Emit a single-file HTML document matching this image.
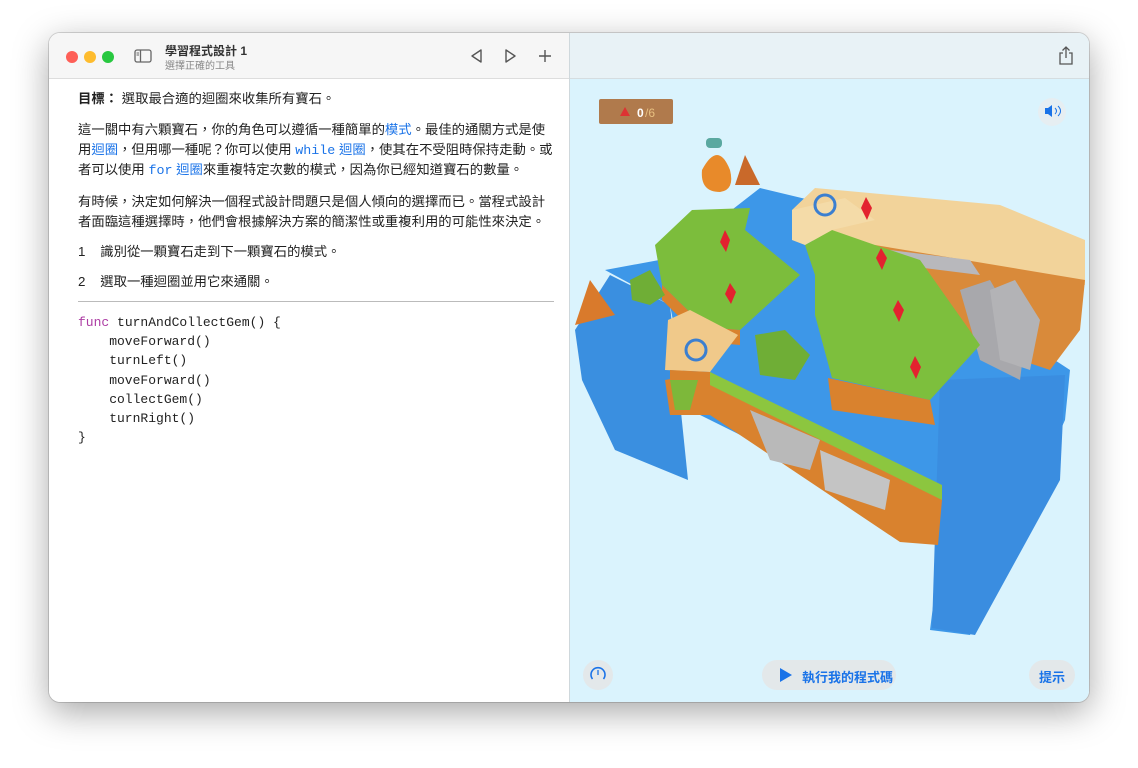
<!DOCTYPE html>
<html><head><meta charset="utf-8"><style>
*{margin:0;padding:0;box-sizing:border-box}
body{width:1138px;height:768px;background:#fff;position:relative;overflow:hidden;font-family:"Liberation Sans","Noto Sans CJK TC",sans-serif}
.win{position:absolute;left:49px;top:33px;width:1040px;height:669px;border-radius:11px;overflow:hidden;box-shadow:0 10px 35px rgba(0,0,0,.35),0 0 0 1px rgba(0,0,0,.15)}
.left{position:absolute;left:0;top:0;width:520px;height:669px;background:#fff}
.tb{position:absolute;left:0;top:0;width:520px;height:46px;background:#f6f6f6;border-bottom:1px solid #ddd}
.right{position:absolute;left:520px;top:0;width:520px;height:669px;background:#daf3fd;border-left:1px solid #cfd8dc}
.rtb{position:absolute;left:0;top:0;width:520px;height:46px;background:#e8f2f6;border-bottom:1px solid #d5dde0}
.dot{position:absolute;top:18px;width:12px;height:12px;border-radius:50%}
.t{position:absolute;left:29px;color:#222;font-size:13.35px;line-height:20px;white-space:nowrap}
.b{color:#1a73e8}
.m{font-family:"Liberation Mono",monospace}
.code{position:absolute;left:29px;top:280px;font-family:"Liberation Mono",monospace;font-size:13px;line-height:19.2px;color:#222;white-space:pre}
.kw{color:#ad3da4}
.btn{position:absolute;background:#e3e8ea;border-radius:16px;color:#1a73e8;font-size:13px;font-weight:600}
</style></head><body>
<div class="win">
<div class="left">
 <div class="tb">
  <div class="dot" style="left:17px;background:#fe5f57"></div>
  <div class="dot" style="left:35px;background:#febc2e"></div>
  <div class="dot" style="left:53px;background:#28c840"></div>
  <svg style="position:absolute;left:85px;top:16px" width="18" height="14"><rect x="1" y="1" width="16" height="12" rx="2" fill="none" stroke="#666" stroke-width="1.3"/><line x1="6.5" y1="1" x2="6.5" y2="13" stroke="#666" stroke-width="1.3"/><line x1="2.5" y1="4" x2="5" y2="4" stroke="#666"/><line x1="2.5" y1="6" x2="5" y2="6" stroke="#666"/></svg>
  <div style="position:absolute;left:116px;top:9px;font-size:12px;font-weight:bold;color:#333">學習程式設計 1</div>
  <div style="position:absolute;left:116px;top:24px;font-size:10px;color:#888">選擇正確的工具</div>
  <svg style="position:absolute;left:420px;top:15px" width="16" height="16"><path d="M12 2 L3 8 L12 14 Z" fill="none" stroke="#555" stroke-width="1.4" stroke-linejoin="round"/></svg>
  <svg style="position:absolute;left:453px;top:15px" width="16" height="16"><path d="M4 2 L13 8 L4 14 Z" fill="none" stroke="#555" stroke-width="1.4" stroke-linejoin="round"/></svg>
  <svg style="position:absolute;left:488px;top:15px" width="16" height="16"><path d="M8 2V14M2 8H14" stroke="#555" stroke-width="1.4"/></svg>
 </div>
 <div class="t" style="top:56px"><b>目標：</b> 選取最合適的迴圈來收集所有寶石。</div>
 <div class="t" style="top:87px">這一關中有六顆寶石，你的角色可以遵循一種簡單的<span class="b">模式</span>。最佳的通關方式是使</div>
 <div class="t" style="top:107px">用<span class="b">迴圈</span>，但用哪一種呢？你可以使用 <span class="b"><span class="m">while</span> 迴圈</span>，使其在不受阻時保持走動。或</div>
 <div class="t" style="top:127px">者可以使用 <span class="b"><span class="m">for</span> 迴圈</span>來重複特定次數的模式，因為你已經知道寶石的數量。</div>
 <div class="t" style="top:159px">有時候，決定如何解決一個程式設計問題只是個人傾向的選擇而已。當程式設計</div>
 <div class="t" style="top:179px">者面臨這種選擇時，他們會根據解決方案的簡潔性或重複利用的可能性來決定。</div>
 <div class="t" style="top:209px">1&nbsp;&nbsp;&nbsp;&nbsp;識別從一顆寶石走到下一顆寶石的模式。</div>
 <div class="t" style="top:239px">2&nbsp;&nbsp;&nbsp;&nbsp;選取一種迴圈並用它來通關。</div>
 <div style="position:absolute;left:29px;top:268px;width:476px;height:1px;background:#bbb"></div>
 <div class="code"><span class="kw">func</span> turnAndCollectGem() {
    moveForward()
    turnLeft()
    moveForward()
    collectGem()
    turnRight()
}</div>
</div>
<div class="right">
 <div class="rtb">
  <svg style="position:absolute;left:488px;top:13px" width="16" height="20"><path d="M8 1V12M4.5 4.5L8 1L11.5 4.5M5 7H2V18H14V7H11" fill="none" stroke="#555" stroke-width="1.3"/></svg>
 </div>
 <svg style="position:absolute;left:0;top:47px" width="520" height="560" viewBox="0 0 520 560">
  <rect x="29" y="19" width="74" height="25" fill="#b07a4c" rx="2"/>
  <path d="M50 36 L55 27 L60 36 Z" fill="#d33"/>
  <text x="67" y="37" font-size="12" font-weight="bold" fill="#fff" font-family="Liberation Sans">0</text><text x="75" y="37" font-size="12" fill="#e8c080" font-family="Liberation Sans">/6</text>
  <circle cx="482" cy="32" r="14" fill="#e6eef2"/>
  <path d="M475 28h3l4-3v12l-4-3h-3z" fill="#1a73e8"/><path d="M485 28q3 3 0 6M488 26q5 5 0 10" stroke="#1a73e8" fill="none"/>
  <path d="M5 250 L40 195 L100 225 L118 400 L45 370 L12 300 Z" fill="#3a8fe0"/>
  <path d="M35 190 L100 178 L190 108 L240 120 L500 290 L495 340 L450 440 L400 555 L360 550 L372 455 L120 330 L100 225 Z" fill="#3d97e8"/>
  <path d="M370 300 L495 295 L490 400 L405 555 L362 548 Z" fill="#3a8de0"/>
  <path d="M95 300 L140 292 L372 420 L368 465 L330 462 L140 335 L100 335 Z" fill="#d9822e"/>
  <path d="M140 292 L372 405 L372 420 L140 305 Z" fill="#8cc63f"/>
  <path d="M180 330 L250 360 L240 390 L200 380 Z" fill="#b9b9b9"/>
  <path d="M250 370 L320 400 L315 430 L255 410 Z" fill="#c4c4c4"/>
  <path d="M100 300 L128 300 L120 330 L105 330Z" fill="#7db83a"/>
  <path d="M222 130 L245 108 L430 125 L515 160 L515 205 L420 210 L300 170 L240 160 Z" fill="#f2d39a"/>
  <path d="M305 165 L515 200 L510 250 L480 290 L420 270 L330 200 Z" fill="#d98a3a"/>
  <path d="M390 210 L420 200 L455 260 L450 300 L410 280 Z" fill="#a8a8ac"/>
  <path d="M320 170 L400 180 L410 195 L330 185Z" fill="#b8b8bc"/>
  <path d="M85 165 L122 130 L180 128 L175 150 L230 195 L170 250 L135 247 L92 205 Z" fill="#7cbd3c"/>
  <path d="M92 205 L135 247 L170 250 L170 265 L135 262 L92 220Z" fill="#d9822e"/>
  <path d="M98 240 L120 230 L168 255 L140 292 L95 290 Z" fill="#f0c98a"/>
  <path d="M100 290 L140 292 L140 300 L100 300Z" fill="#d9822e"/>
  <circle cx="126" cy="270" r="10" fill="none" stroke="#3b7fd0" stroke-width="3"/>
  <path d="M60 200 L80 190 L95 215 L80 225 L62 220Z" fill="#6fae36"/>
  <path d="M235 165 L262 150 L305 165 L350 180 L410 265 L360 320 L262 298 L245 235 L245 195 Z" fill="#7dbf3d"/>
  <path d="M258 298 L360 320 L365 345 L262 330 Z" fill="#d9822e"/>
  <path d="M222 130 L275 118 L305 140 L262 150 L235 165 L222 160Z" fill="#f4dba8"/>
  <circle cx="255" cy="125" r="10" fill="none" stroke="#3b7fd0" stroke-width="3"/>
  <path d="M185 255 L215 250 L240 275 L225 300 L190 295 Z" fill="#6fae36"/>
  <path d="M420 210 L445 200 L470 240 L460 290 L430 280Z" fill="#b3b3b6"/>
  <path d="M132 90 Q148 60 160 90 Q165 110 150 112 Q130 112 132 90Z" fill="#e88a2a"/>
  <rect x="136" y="58" width="16" height="10" rx="4" fill="#5aa8a0"/>
  <path d="M165 105 L175 75 L190 105 Z" fill="#c9692a"/>
  <path d="M5 245 L20 200 L45 235 Z" fill="#d97a2c"/>
  <g fill="#e3222f">
   <path d="M155 150 L160 160 L156 172 L150 162Z"/>
   <path d="M160 203 L166 212 L161 224 L155 214Z"/>
   <path d="M296 117 L302 128 L297 140 L291 128Z"/>
   <path d="M311 168 L317 178 L312 190 L306 178Z"/>
   <path d="M328 220 L334 230 L329 242 L323 230Z"/>
   <path d="M345 276 L351 287 L346 299 L340 287Z"/>
  </g>
 </svg>
 <div class="btn" style="left:13px;top:627px;width:30px;height:30px;border-radius:50%"><svg width="30" height="30"><path d="M9.5 19A7 7 0 1 1 20.5 19" fill="none" stroke="#1a73e8" stroke-width="1.6"/><line x1="15" y1="10" x2="15" y2="15" stroke="#1a73e8" stroke-width="1.3"/></svg></div>
 <div class="btn" style="left:192px;top:627px;width:134px;height:30px"><svg style="position:absolute;left:18px;top:8px" width="12" height="14"><path d="M0 0L12 7L0 14Z" fill="#1a73e8"/></svg><span style="position:absolute;left:40px;top:7px">執行我的程式碼</span></div>
 <div class="btn" style="left:459px;top:627px;width:46px;height:30px"><span style="position:absolute;left:10px;top:7px">提示</span></div>
</div>
</div>
</body></html>
